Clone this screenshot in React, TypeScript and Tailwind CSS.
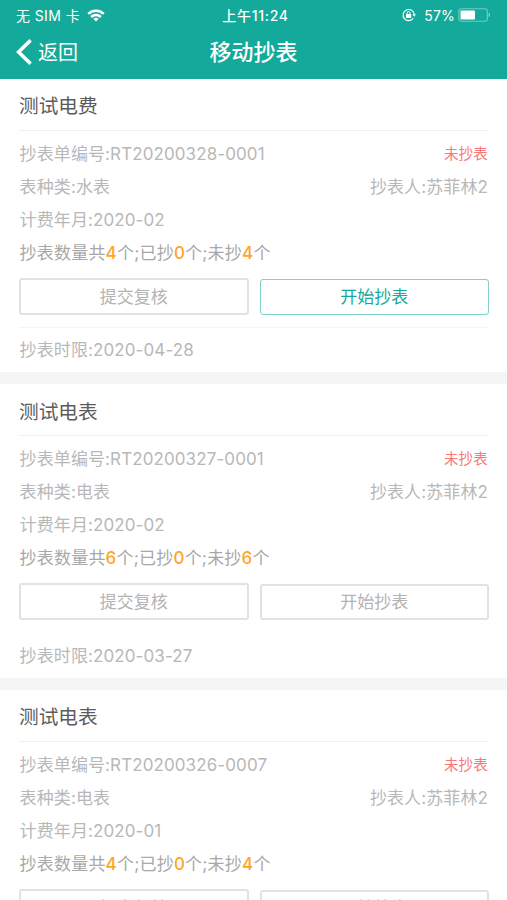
import React from 'react';

interface MeterTask {
  title: string;
  orderNo: string;
  status: string;
  meterType: string;
  reader: string;
  billingMonth: string;
  total: number;
  done: number;
  pending: number;
  deadline: string;
  canStart: boolean;
}

const tasks: MeterTask[] = [
  {
    title: '测试电费',
    orderNo: 'RT20200328-0001',
    status: '未抄表',
    meterType: '水表',
    reader: '苏菲林2',
    billingMonth: '2020-02',
    total: 4,
    done: 0,
    pending: 4,
    deadline: '2020-04-28',
    canStart: true,
  },
  {
    title: '测试电表',
    orderNo: 'RT20200327-0001',
    status: '未抄表',
    meterType: '电表',
    reader: '苏菲林2',
    billingMonth: '2020-02',
    total: 6,
    done: 0,
    pending: 6,
    deadline: '2020-03-27',
    canStart: false,
  },
  {
    title: '测试电表',
    orderNo: 'RT20200326-0007',
    status: '未抄表',
    meterType: '电表',
    reader: '苏菲林2',
    billingMonth: '2020-01',
    total: 4,
    done: 0,
    pending: 4,
    deadline: '2020-03-26',
    canStart: false,
  },
];

const WifiIcon = () => (
  <svg className="ml-[7px] h-[13px] w-[18px]" viewBox="0 0 18 13" fill="none" stroke="currentColor" strokeWidth="2.5">
    <path d="M1.2 4.9C5.6.7 12.4.7 16.8 4.9" />
    <path d="M4.1 8C6.9 5.4 11.1 5.4 13.9 8" />
    <path d="M9 12.4L6.3 9.7C7.8 8.4 10.2 8.4 11.7 9.7Z" fill="currentColor" stroke="none" />
  </svg>
);

const RotationLockIcon = () => (
  <svg className="h-[14px] w-[14px]" viewBox="0 0 14 14" fill="none" stroke="currentColor">
    <path d="M11.2 10.4A5.6 5.6 0 1 1 12.2 6" strokeWidth="1.1" />
    <path d="M10.4 6.2H14L12.2 8.8Z" fill="currentColor" stroke="none" />
    <rect x="4" y="6.1" width="5.2" height="3.9" rx=".5" fill="currentColor" stroke="none" />
    <path d="M5.1 6.3V5.1a1.5 1.5 0 0 1 3 0v1.2" strokeWidth="1" />
  </svg>
);

const BatteryIcon = () => (
  <svg className="ml-[3px] h-[14px] w-[33px]" viewBox="0 0 33 14" fill="none">
    <rect x=".8" y=".8" width="28.6" height="12.4" rx="2.6" stroke="white" strokeOpacity=".4" strokeWidth="1.1" />
    <rect x="2.5" y="2.4" width="14.5" height="9.2" rx="1" fill="white" />
    <path d="M30.6 4.8C32.4 5.4 32.4 8.6 30.6 9.2Z" fill="white" fillOpacity=".5" />
  </svg>
);

const Header = () => (
  <header className="h-[79px] shrink-0 bg-[#13aa9b] text-white">
    <div className="grid h-[30px] grid-cols-3 items-center pl-4 pr-[16px] text-[14px]">
      <div className="flex items-center whitespace-nowrap tracking-[0.4px]">
        无 SIM 卡
        <WifiIcon />
      </div>
      <div className="whitespace-nowrap pl-[4px] text-center font-medium tracking-[0.7px]">上午11:24</div>
      <div className="flex items-center justify-end">
        <RotationLockIcon />
        <span className="ml-2 tracking-[0.2px]">57%</span>
        <BatteryIcon />
      </div>
    </div>
    <div className="grid h-[44px] grid-cols-3 items-center px-4">
      <button className="flex items-center text-left text-[20px]">
        <svg className="h-[26px] w-[16px]" viewBox="0 0 16 26" fill="none" stroke="currentColor" strokeWidth="3.6">
          <path d="M14.6 1.3L2.6 13L14.6 24.7" />
        </svg>
        <span className="ml-1.5 pt-0.5">返回</span>
      </button>
      <h1 className="whitespace-nowrap text-center text-[22px] font-medium">移动抄表</h1>
    </div>
  </header>
);

const Count = ({ value }: { value: number }) => (
  <span className="font-medium text-[#ffa51f]">{value}</span>
);

const TaskCard = ({ task }: { task: MeterTask }) => (
  <section className="h-[305.4px] shrink-0 border-b-[12px] border-[#f5f5f5] bg-white px-[19px]">
    <h2 className="flex h-[52px] items-center border-b border-[#eeeeee] pt-[5px] text-[19.7px] text-[#5c5c5c]">
      {task.title}
    </h2>
    <div className="pl-[0.6px] pt-[7px] text-[17px] leading-[33px] tracking-[0.1px] text-[#b8b8b8]">
      <div className="flex justify-between">
        <span>抄表单编号:{task.orderNo}</span>
        <span className="text-[14.5px] leading-[32px] tracking-[0.2px] text-[#fb7777]">{task.status}</span>
      </div>
      <div className="flex justify-between">
        <span>表种类:{task.meterType}</span>
        <span>抄表人:{task.reader}</span>
      </div>
      <div>计费年月:{task.billingMonth}</div>
      <div className="tracking-[0.2px] text-[#a8a8a8]">
        抄表数量共<Count value={task.total} />个;已抄<Count value={task.done} />个;未抄<Count value={task.pending} />个
      </div>
    </div>
    <div className="-mr-px mt-[8px] grid grid-cols-2 gap-[11px] text-[17px]">
      <button className="h-[37px] rounded-[3px] border-2 border-[#e2e2e2] pt-0.5 text-[#b3b3b3]">提交复核</button>
      <button
        className={`mt-px h-[36px] rounded-[3px] pt-px ${
          task.canStart ? 'border border-[#7fd0c6] text-[#13aa9b]' : 'border-2 border-[#e2e2e2] text-[#b3b3b3]'
        }`}
      >
        开始抄表
      </button>
    </div>
    <div
      className={`mt-[12px] flex h-[45px] items-center border-t pl-[0.6px] pt-[2px] text-[17px] tracking-[0.1px] text-[#b8b8b8] ${
        task.canStart ? 'border-[#f5f5f5]' : 'border-[#fdfdfd]'
      }`}
    >
      抄表时限:{task.deadline}
    </div>
  </section>
);

const App: React.FC = () => {
  return (
    <div className="flex h-[900px] w-[507px] flex-col overflow-hidden bg-white font-['Inter','Noto_Sans_CJK_SC',sans-serif]">
      <Header />
      {tasks.map((task) => (
        <TaskCard key={task.orderNo} task={task} />
      ))}
    </div>
  );
};

export default App;
